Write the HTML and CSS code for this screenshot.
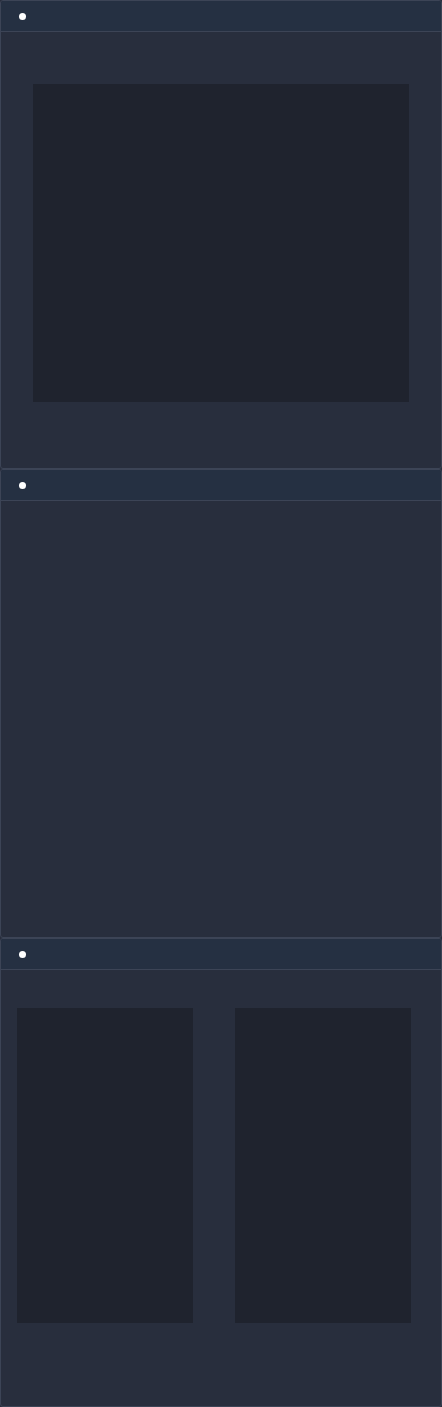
FILE: index.html
```html
<!DOCTYPE html>
<html>
<head>
<meta charset="utf-8">
<link rel="stylesheet" href="styles.css">
</head>
<body>
<div class="stack">
  <section class="panel">
    <header class="panel-head"><span class="dot"></span></header>
    <div class="panel-body body-single">
      <div class="well well-wide"></div>
    </div>
  </section>
  <section class="panel">
    <header class="panel-head"><span class="dot"></span></header>
    <div class="panel-body"></div>
  </section>
  <section class="panel">
    <header class="panel-head"><span class="dot"></span></header>
    <div class="panel-body body-double">
      <div class="well well-half"></div>
      <div class="well well-half"></div>
    </div>
  </section>
</div>
</body>
</html>
```
FILE: styles.css
```css
* { box-sizing: border-box; }
html, body { margin: 0; padding: 0; background: #282e3d; }
body { font-family: "Liberation Sans", Arial, sans-serif; }
.stack { display: flex; flex-direction: column; width: 442px; }
.panel {
  height: 469px;
  border: 1px solid #3c4456;
  border-radius: 3px;
  background: #282e3d;
  display: flex;
  flex-direction: column;
  overflow: hidden;
}
.panel-head {
  height: 31px;
  flex: none;
  background: #253042;
  border-bottom: 1px solid #3c4456;
  display: flex;
  align-items: center;
  padding-left: 18px;
}
.dot {
  width: 7px;
  height: 7px;
  border-radius: 50%;
  background: #ffffff;
}
.panel-body { flex: 1; }
.body-single { padding: 52px 32px 0 32px; }
.body-double { display: flex; padding: 38px 0 0 16px; gap: 42px; }
.well { background: #1f232e; }
.well-wide { width: 376px; height: 318px; }
.well-half { width: 176px; height: 315px; }
```
